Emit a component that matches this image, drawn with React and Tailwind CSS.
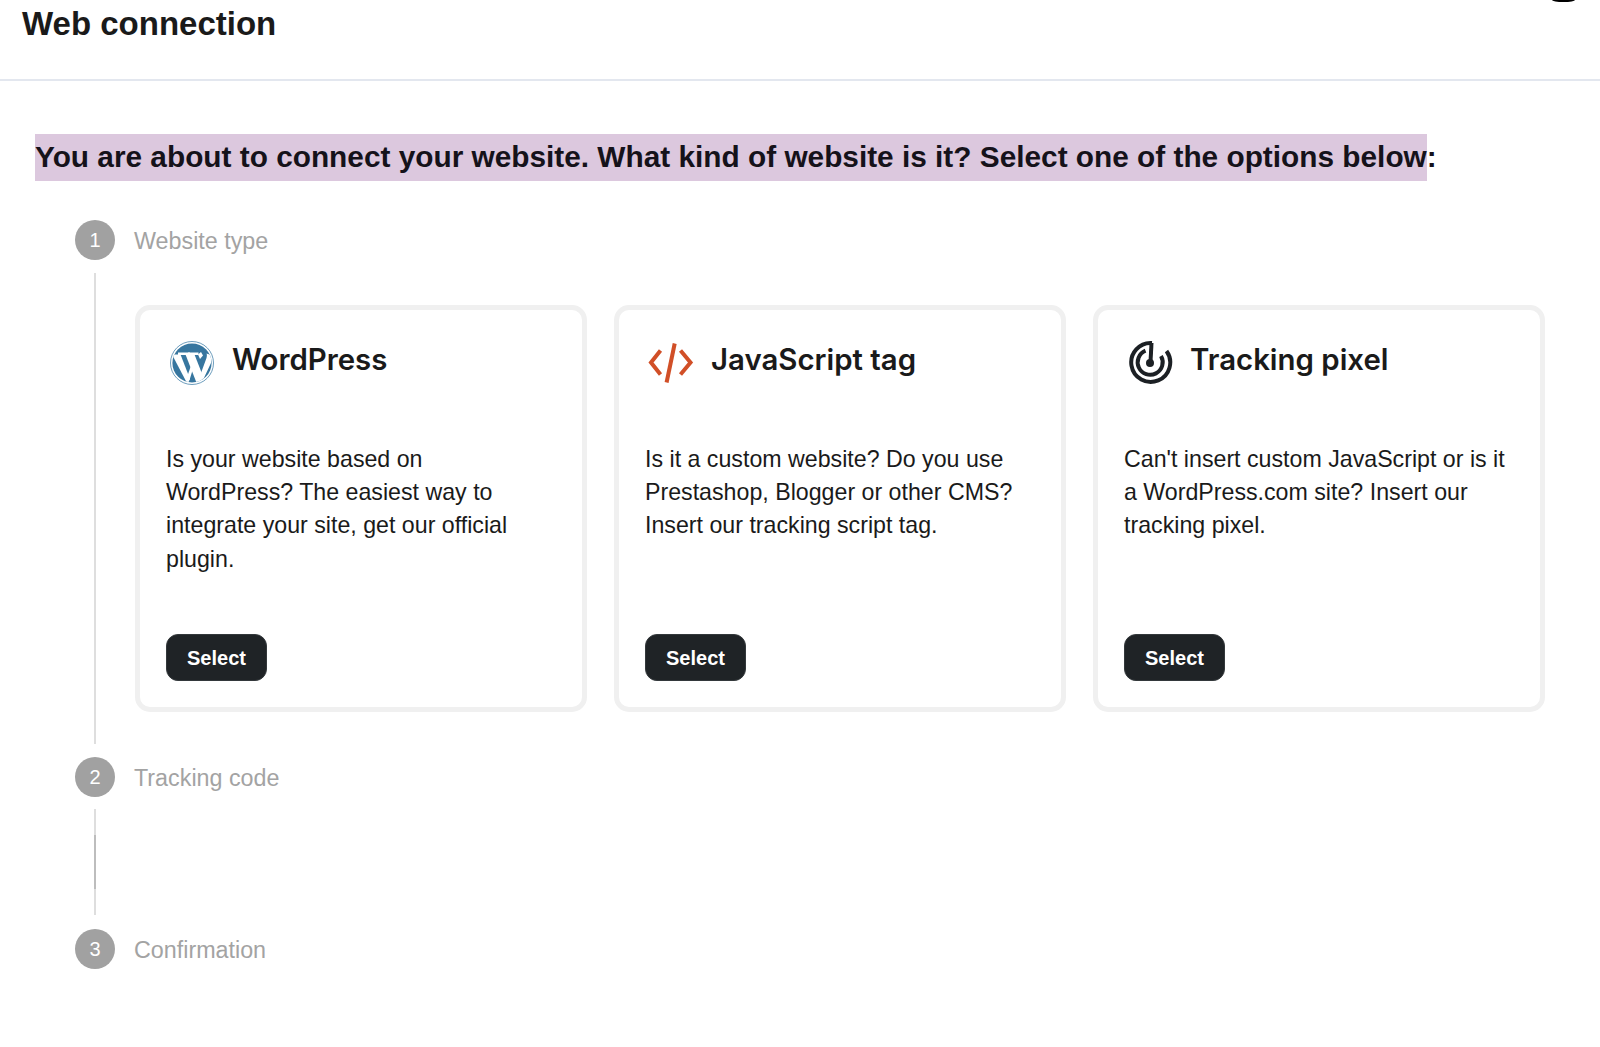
const cards = [
  {
    title: 'WordPress',
    text: 'Is your website based on WordPress? The easiest way to integrate your site, get our official plugin.',
    icon: 'wp',
  },
  {
    title: 'JavaScript tag',
    text: 'Is it a custom website? Do you use Prestashop, Blogger or other CMS? Insert our tracking script tag.',
    icon: 'js',
  },
  {
    title: 'Tracking pixel',
    text: "Can't insert custom JavaScript or is it a WordPress.com site? Insert our tracking pixel.",
    icon: 'pixel',
  },
];

function CardIcon({ name }) {
  if (name === 'wp') {
    return (
      <svg viewBox="0 0 44 44" className="h-[44px] w-[44px]">
        <defs>
          <clipPath id="wp-disc">
            <circle cx="22" cy="22" r="19.6" />
          </clipPath>
        </defs>
        <circle cx="22" cy="22" r="21.5" fill="none" stroke="#5c92b6" strokeWidth="0.9" />
        <circle cx="22" cy="22" r="19.6" fill="#37769f" />
        <g clipPath="url(#wp-disc)" fill="#fff">
          <path d="M2 13.5H10.5L20 38 17.5 43Z" />
          <path d="M15.5 13.5H24.5L33.5 36.5 30 43H27Z" />
          <path d="M17 36 22.5 20.5 24 24.5 19.5 39Z" />
          <path d="M31 32 36.5 17C37 15 37 13.5 36.5 12.5L41 14V22L33 39Z" />
          <path d="M8 11.5H20V14H8Z" />
          <path d="M18 11.5H28.5V14H18Z" />
          <path d="M28 13.5 31 11 33 14.5 30 18Z" />
        </g>
      </svg>
    );
  }
  if (name === 'js') {
    return (
      <svg viewBox="0 0 46 40" className="-ml-[1px] h-[40px] w-[46px]" fill="none" stroke="#d14f27" strokeWidth="4">
        <path d="M12.5 7.5 3 19.5 12.5 31.5" />
        <path d="M26.7 0.5 18.6 39.5" />
        <path d="M32.5 7.5 42.5 19.5 32.5 31.5" />
      </svg>
    );
  }
  return (
    <svg viewBox="0 0 46 46" className="h-[46px] w-[46px]" fill="none" stroke="#1c2024" strokeWidth="4">
      <path d="M24 3 A19.5 19.5 0 1 0 38.5 11" />
      <path d="M17.5 10.7 A12.5 12.5 0 1 0 33 16" />
      <path d="M23.5 3 22.5 22" />
      <circle cx="22" cy="23" r="4" fill="#1c2024" stroke="none" />
    </svg>
  );
}

function Step({ n, label }) {
  return (
    <div className="flex h-10 items-center gap-[19px] pl-[75px]">
      <div className="flex h-10 w-10 items-center justify-center rounded-full bg-[#a1a1a1] text-[20px] text-white">{n}</div>
      <span className="relative top-px text-[23.3px] text-[#a3a3a3]">{label}</span>
    </div>
  );
}

function Card({ card }) {
  return (
    <div className="flex h-[407px] flex-col rounded-[15px] border-[5px] border-[#f0f0f0] bg-white px-[26px] pt-[27px]">
      <div className="flex h-[52px] items-center">
        <div className="flex w-[66px] shrink-0 items-center pl-[4px]">
          <CardIcon name={card.icon} />
        </div>
        <h2 className="-mt-[6px] text-[29.4px] font-semibold text-[#1a1a1a]">{card.title}</h2>
      </div>
      <p className="mt-[54px] h-[132px] max-w-[385px] font-['Liberation_Sans',Arial,sans-serif] text-[23.2px] leading-[33.2px] text-[#1a1a1a]">
        {card.text}
      </p>
      <button
        type="button"
        className="mt-[59px] flex h-[47px] w-[101px] items-center justify-center rounded-[12px] border border-[#33383b] bg-[#1f2326] font-['Liberation_Sans',Arial,sans-serif] text-[20px] font-bold text-white"
      >
        Select
      </button>
    </div>
  );
}

export default function App() {
  return (
    <div className="relative h-[1047px] w-[1600px] overflow-hidden bg-white font-['Liberation_Sans',Arial,sans-serif]">
      <div className="absolute right-[25px] -top-[2px] h-[4px] w-[23px] rounded-[50%] bg-black" />
      <header className="h-[81px] border-b-2 border-[#e3e7ef] pl-[22px] pt-[4px]">
        <h1 className="text-[33px] font-bold leading-[40px] text-[#1a1a1a]">Web connection</h1>
      </header>

      <main className="pt-[52px]">
        <p className="pl-[35px] text-[29.8px] font-bold leading-[47px] text-[#15121a]">
          <span className="inline-block bg-[#dcc8de] pb-[2px] leading-[45px]">
            You are about to connect your website. What kind of website is it? Select one of the options below
          </span>
          :
        </p>

        <div className="pt-[39px]">
          <Step n="1" label="Website type" />
          <div className="flex pl-[75px]">
            <div className="flex w-10 justify-center pb-[13px] pt-[13px]">
              <div className="w-[2px] bg-[#dedede]" />
            </div>
            <div className="ml-[20px] grid w-[1410px] grid-cols-3 gap-[27px] py-[45px] font-['Inter',sans-serif]">
              {cards.map((card) => (
                <Card key={card.title} card={card} />
              ))}
            </div>
          </div>
          <Step n="2" label="Tracking code" />
          <div className="flex h-[132px] pl-[75px]">
            <div className="flex w-10 justify-center pb-[14px] pt-[12px]">
              <div className="flex w-[2px] bg-[#dedede] py-[26px]">
                <div className="w-full bg-[#bdbdbd]" />
              </div>
            </div>
          </div>
          <Step n="3" label="Confirmation" />
        </div>
      </main>
    </div>
  );
}
